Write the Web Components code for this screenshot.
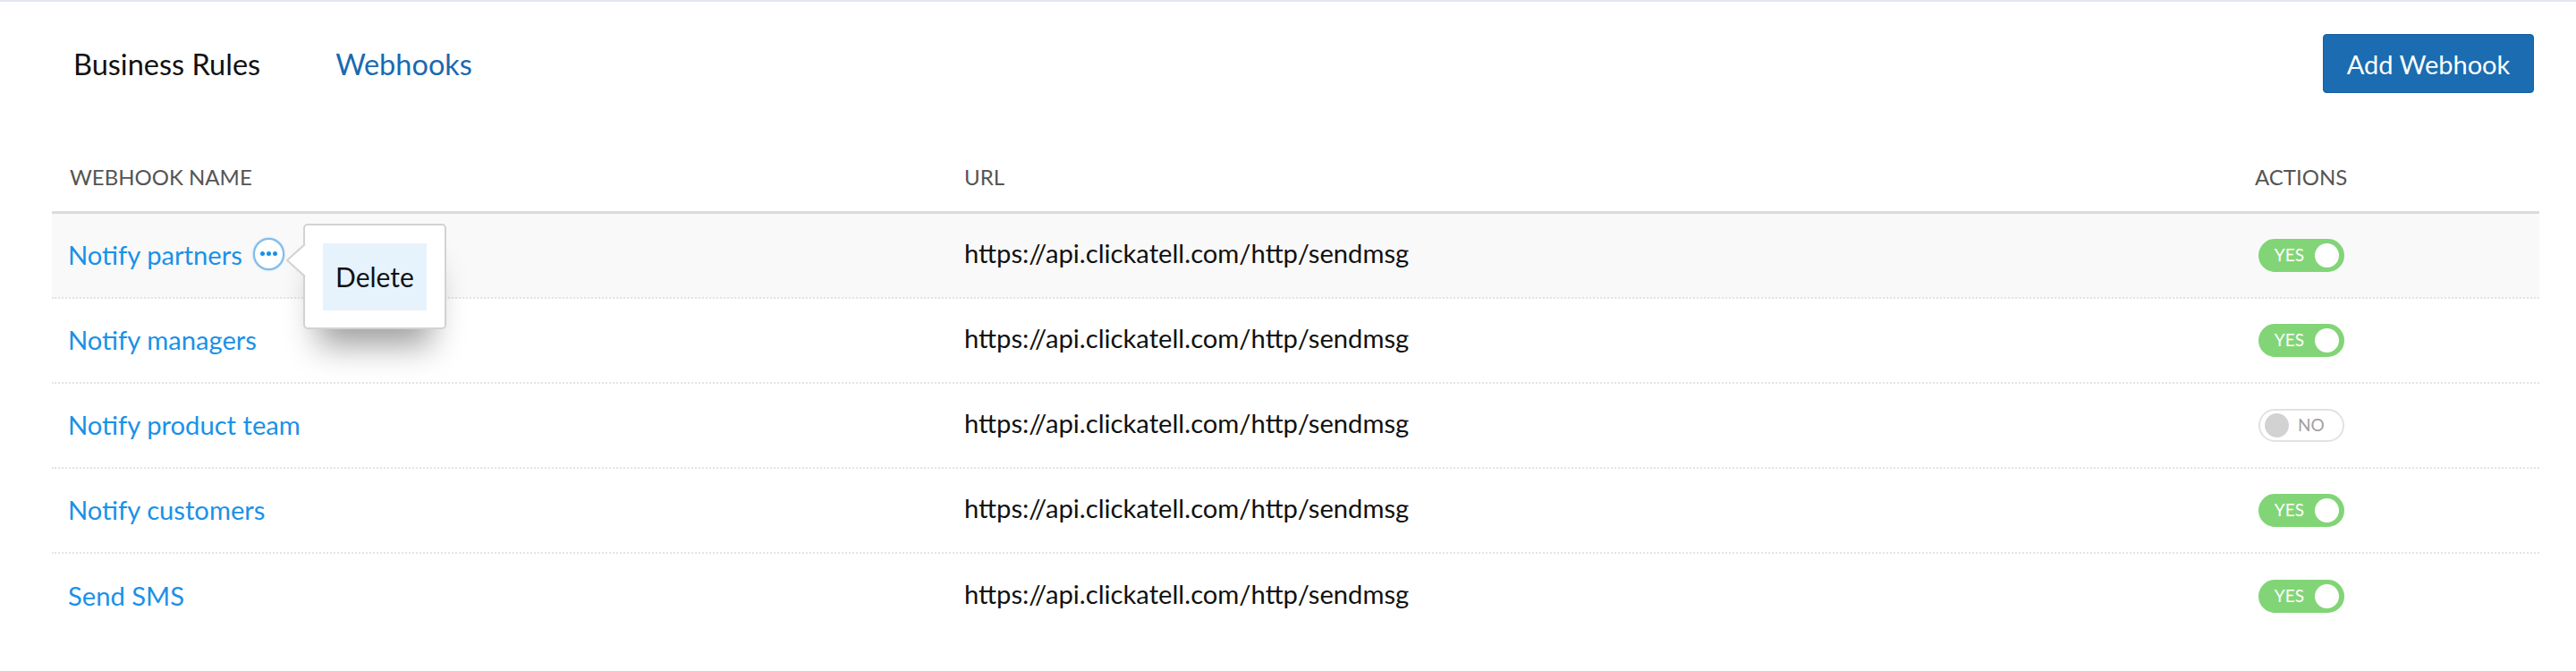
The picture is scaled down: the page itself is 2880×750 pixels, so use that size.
<!DOCTYPE html>
<html>
<head>
<meta charset="utf-8">
<title>Webhooks</title>
<style>
  html, body {
    margin: 0;
    padding: 0;
    background: #fff;
    font-family: Lato, "Open Sans", sans-serif;
  }
</style>
</head>
<body>
<webhooks-page>
  <page-tabs slot="tabs"></page-tabs>
  <webhook-table>
    <webhook-row name="Notify partners" url="https://api.clickatell.com/http/sendmsg" on active></webhook-row>
    <webhook-row name="Notify managers" url="https://api.clickatell.com/http/sendmsg" on></webhook-row>
    <webhook-row name="Notify product team" url="https://api.clickatell.com/http/sendmsg"></webhook-row>
    <webhook-row name="Notify customers" url="https://api.clickatell.com/http/sendmsg" on></webhook-row>
    <webhook-row name="Send SMS" url="https://api.clickatell.com/http/sendmsg" on last></webhook-row>
  </webhook-table>
</webhooks-page>

<script>
class WebhooksPage extends HTMLElement {
  constructor() {
    super();
    this.shadowDOM = this.attachShadow({ mode: "open" });
    this.shadowDOM.innerHTML = `
      <style>
        :host {
          display: block;
          height: 750px;
          box-sizing: border-box;
          border-top: 2px solid #e2e8ec;
          padding: 0 44px 0 58px;
        }
      </style>
      <slot name="tabs"></slot>
      <slot></slot>
    `;
  }
}

class PageTabs extends HTMLElement {
  constructor() {
    super();
    this.shadowDOM = this.attachShadow({ mode: "open" });
    this.shadowDOM.innerHTML = `
      <style>
        :host {
          display: flex;
          align-items: flex-start;
          justify-content: space-between;
          height: 126px;
          padding: 36px 3px 0 24px;
        }
        nav {
          display: flex;
          gap: 84px;
          font-size: 32.5px;
          line-height: 36px;
          margin-top: 16px;
        }
        .current { color: #111; }
        .link { color: #1a69b0; }
        button {
          width: 236px;
          height: 66px;
          padding: 0;
          background: #1b6cb0;
          border: 1px solid #1560a3;
          border-radius: 4px;
          color: #fff;
          font: 29px Lato, sans-serif;
        }
      </style>
      <nav>
        <span class="current">Business Rules</span>
        <span class="link">Webhooks</span>
      </nav>
      <button type="button">Add Webhook</button>
    `;
  }
}

class WebhookTable extends HTMLElement {
  constructor() {
    super();
    this.shadowDOM = this.attachShadow({ mode: "open" });
    this.shadowDOM.innerHTML = `
      <style>
        :host {
          display: block;
          margin-right: -3px;
        }
        .head {
          display: grid;
          grid-template-columns: 1020px 1443px 1fr;
          align-items: center;
          height: 66px;
          padding-bottom: 6px;
          border-bottom: 3px solid #dcdcdc;
          color: #555;
          font-size: 24px;
        }
        .head span:first-child { padding-left: 20px; }
      </style>
      <div class="head">
        <span>WEBHOOK NAME</span>
        <span>URL</span>
        <span>ACTIONS</span>
      </div>
      <slot></slot>
    `;
  }
}

class WebhookRow extends HTMLElement {
  constructor() {
    super();
    this.shadowDOM = this.attachShadow({ mode: "open" });
  }

  connectedCallback() {
    this.render();
  }

  render() {
    const active = this.hasAttribute("active");
    this.shadowDOM.innerHTML = `
      <style>
        :host {
          display: grid;
          grid-template-columns: 1020px 1447px 1fr;
          align-items: center;
          height: 95px;
          box-sizing: border-box;
          border-bottom: 2px dotted #e4e4e4;
          font-size: 29.2px;
        }
        :host([active]) { background: #f9f9f9; }
        :host([last]) { border-bottom: none; }
        .name {
          display: flex;
          align-items: center;
          gap: 12px;
          padding-left: 18px;
          margin-bottom: 2px;
          color: #1a91e8;
        }
        .url {
          color: #111;
          margin-top: -3px;
          margin-bottom: 4px;
        }
      </style>
      <div class="name">
        <span>${this.getAttribute("name")}</span>
        ${active ? "<row-menu></row-menu>" : ""}
      </div>
      <div class="url">${this.getAttribute("url")}</div>
      <toggle-switch ${this.hasAttribute("on") ? "on" : ""}></toggle-switch>
    `;
  }
}

class RowMenu extends HTMLElement {
  constructor() {
    super();
    this.shadowDOM = this.attachShadow({ mode: "open" });
    this.shadowDOM.innerHTML = `
      <style>
        :host {
          display: block;
          position: relative;
          width: 35px;
          height: 36px;
          top: -1px;
        }
        .dots {
          display: flex;
          align-items: center;
          justify-content: center;
          gap: 2px;
          width: 35px;
          height: 36px;
          box-sizing: border-box;
          background: #fff;
          border: 2px solid #7fbcea;
          border-radius: 50%;
          box-shadow: 0 0 2px #7fbcea;
        }
        .dots i {
          width: 5px;
          height: 5px;
          border-radius: 50%;
          background: #1a91e8;
        }
        .pop {
          position: absolute;
          left: 56px;
          top: -16px;
          width: 160px;
          height: 118px;
          box-sizing: border-box;
          padding: 20px;
          background: #fff;
          border: 2px solid #d2d2d2;
          border-radius: 5px;
          box-shadow: 0 34px 36px -16px rgba(0, 0, 0, .38);
          z-index: 2;
        }
        .arrow {
          position: absolute;
          left: 37px;
          top: 6px;
          z-index: 3;
        }
        .item {
          display: flex;
          align-items: center;
          justify-content: center;
          height: 75px;
          background: #e6f3fd;
          color: #111;
          font-size: 30px;
        }
      </style>
      <div class="dots"><i></i><i></i><i></i></div>
      <div class="pop"><div class="item">Delete</div></div>
      <svg class="arrow" width="22" height="38" viewBox="0 0 22 38">
        <path d="M21 1 1 19l20 18z" fill="#fff"/>
        <path d="M21 1 1 19l20 18" fill="none" stroke="#d2d2d2" stroke-width="2"/>
      </svg>
    `;
  }
}

class ToggleSwitch extends HTMLElement {
  constructor() {
    super();
    this.shadowDOM = this.attachShadow({ mode: "open" });
  }

  connectedCallback() {
    const on = this.hasAttribute("on");
    this.shadowDOM.innerHTML = `
      <style>
        :host {
          display: flex;
          align-items: center;
          box-sizing: border-box;
          width: 96px;
          height: 37px;
          padding: 0 5px;
          border-radius: 19px;
          font-size: 19px;
          background: #fff;
          border: 2px solid #e2e2e2;
          color: #a0a0a0;
          gap: 10px;
          margin-top: -1px;
        }
        :host([on]) {
          background: #82d577;
          border-color: #82d577;
          color: #fff;
          justify-content: flex-end;
          gap: 12px;
          padding-right: 4px;
        }
        span:not(.knob) { margin-top: -2px; }
        .knob {
          flex: none;
          width: 27px;
          height: 27px;
          border-radius: 50%;
          background: #d2d2d2;
        }
        :host([on]) .knob { background: #fff; }
      </style>
      ${on
        ? '<span>YES</span><span class="knob"></span>'
        : '<span class="knob"></span><span>NO</span>'}
    `;
  }
}

customElements.define("webhooks-page", WebhooksPage);
customElements.define("page-tabs", PageTabs);
customElements.define("webhook-table", WebhookTable);
customElements.define("row-menu", RowMenu);
customElements.define("toggle-switch", ToggleSwitch);
customElements.define("webhook-row", WebhookRow);
</script>
</body>
</html>
